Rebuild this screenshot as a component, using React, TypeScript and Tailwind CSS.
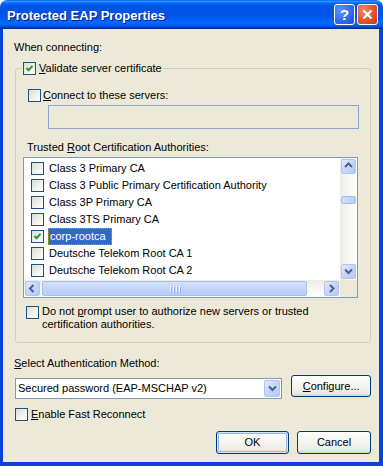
import React from "react"

const rows = [
    { label: "Class 3 Primary CA" },
    { label: "Class 3 Public Primary Certification Authority" },
    { label: "Class 3P Primary CA" },
    { label: "Class 3TS Primary CA" },
    { label: "corp-rootca", checked: true, selected: true },
    { label: "Deutsche Telekom Root CA 1" },
    { label: "Deutsche Telekom Root CA 2" },
]

function Check({ checked }: { checked?: boolean }) {
    return (
        <span className="w-[13px] h-[13px] shrink-0 border border-[#1c5180] bg-[linear-gradient(135deg,#dcdcd7_0%,#f2f2ee_60%,#ffffff_100%)] flex items-center justify-center">
            {checked && (
                <svg width="9" height="9" viewBox="0 0 9 9">
                    <polyline points="1.5,4 3.5,6.2 7.5,1.8" fill="none" stroke="#21a121" strokeWidth="2" />
                </svg>
            )}
        </span>
    )
}

function Arrow({ dir }: { dir: "up" | "down" | "left" | "right" }) {
    const pts = {
        up: "1,5 4.5,1.5 8,5",
        down: "1,2.5 4.5,6 8,2.5",
        left: "5.5,1 2,4.5 5.5,8",
        right: "3,1 6.5,4.5 3,8",
    }[dir]
    return (
        <svg width="9" height="9" viewBox="0 0 9 9">
            <polyline points={pts} fill="none" stroke="#4d6185" strokeWidth="2" />
        </svg>
    )
}

function ScrollBtn({ dir }: { dir: "up" | "down" | "left" | "right" }) {
    return (
        <div className="w-[17px] h-[17px] shrink-0 p-[1px]">
            <div className="w-full h-full rounded-[2px] border border-[#b1c4f0] bg-[linear-gradient(135deg,#e3ebfe_0%,#c6d6fc_45%,#b6caf7_100%)] flex items-center justify-center">
                <Arrow dir={dir} />
            </div>
        </div>
    )
}

function XpButton({ children, def, className }: { children: React.ReactNode; def?: boolean; className: string }) {
    return (
        <div
            className={`${className} rounded-[3px] border border-[#003c74] bg-[linear-gradient(to_bottom,#ffffff_0%,#f4f3ee_50%,#ecebe6_85%,#d6d0c5_100%)] flex items-center justify-center ${def ? "shadow-[inset_0_0_0_1px_#cee7ff,inset_0_0_0_2px_#98b8ea]" : ""}`}
        >
            {children}
        </div>
    )
}

function TitleBar() {
    return (
        <div className="h-[29px] shrink-0 rounded-t-[7px] bg-[linear-gradient(to_bottom,#0058ee_0%,#3593ff_4%,#288eff_6%,#127dff_8%,#036ffc_10%,#0262ee_14%,#0057e5_20%,#0054e3_24%,#0055eb_56%,#005bf5_66%,#026afe_76%,#0062ef_86%,#0052d6_92%,#0040ab_94%,#003092_100%)] flex items-center pl-[7px] pr-[5px]">
            <span className="flex-1 pt-[2px] text-white font-bold text-[13px] leading-[16px] [text-shadow:1px_1px_0_#0a1a7a]">
                Protected EAP Properties
            </span>
            <div className="w-[21px] h-[21px] rounded-[3px] border border-white bg-[radial-gradient(circle_at_30%_30%,#5b95ff_0%,#2f6cf2_55%,#1c4fd6_100%)] flex items-center justify-center text-white font-bold text-[15px] leading-none">
                ?
            </div>
            <div className="ml-[2px] w-[21px] h-[21px] rounded-[3px] border border-white bg-[radial-gradient(circle_at_30%_30%,#f08a6a_0%,#e0532e_55%,#c43c15_100%)] flex items-center justify-center">
                <svg width="11" height="11" viewBox="0 0 11 11">
                    <path d="M1.5 1.5 L9.5 9.5 M9.5 1.5 L1.5 9.5" stroke="#fff" strokeWidth="2.2" />
                </svg>
            </div>
        </div>
    )
}

function CertList() {
    return (
        <div className="ml-[7px] w-[335px] h-[141px] border border-[#7f9db9] bg-white flex">
            <div className="flex-1 flex flex-col min-w-0">
                <div className="flex-1 pt-[2px] overflow-hidden">
                    {rows.map((r) => (
                        <div key={r.label} className="h-[17px] flex items-center pl-[7px]">
                            <Check checked={r.checked} />
                            <span
                                className={`ml-[4px] h-[17px] whitespace-nowrap ${r.selected ? "pl-[1px] pr-[5px] leading-[15px] bg-[#316ac5] text-white border border-dotted border-[#ce953a]" : "pl-[1px] leading-[17px]"}`}
                            >
                                {r.label}
                            </span>
                        </div>
                    ))}
                </div>
                <div className="h-[17px] flex bg-[linear-gradient(to_bottom,#eeede5,#fefefb)]">
                    <ScrollBtn dir="left" />
                    <div className="w-[267px] h-[17px] p-[1px]">
                        <div className="w-full h-full rounded-[2px] border border-[#a9bde9] bg-[linear-gradient(to_bottom,#d4e0fd_0%,#c5d5fb_50%,#b8ccf7_100%)] flex items-center justify-center gap-[1px]">
                            <span className="w-[1px] h-[6px] bg-[#eef4fe] shadow-[1px_1px_0_#8cb0f8]" />
                            <span className="ml-[1px] w-[1px] h-[6px] bg-[#eef4fe] shadow-[1px_1px_0_#8cb0f8]" />
                            <span className="ml-[1px] w-[1px] h-[6px] bg-[#eef4fe] shadow-[1px_1px_0_#8cb0f8]" />
                            <span className="ml-[1px] w-[1px] h-[6px] bg-[#eef4fe] shadow-[1px_1px_0_#8cb0f8]" />
                        </div>
                    </div>
                    <div className="flex-1" />
                    <ScrollBtn dir="right" />
                </div>
            </div>
            <div className="w-[17px] flex flex-col bg-[linear-gradient(to_right,#eeede5,#fefefb)]">
                <ScrollBtn dir="up" />
                <div className="flex-1 pt-[21px] px-[1px]">
                    <div className="h-[8px] rounded-[2px] border border-[#a9bde9] bg-[linear-gradient(to_right,#d4e0fd,#b8ccf7)]" />
                </div>
                <ScrollBtn dir="down" />
                <div className="h-[17px] bg-[#ece9d8]" />
            </div>
        </div>
    )
}

export default function App() {
    return (
        <div className="w-[383px] h-[466px] flex flex-col font-['Liberation_Sans',Arial,sans-serif] text-[11px] text-black">
            <TitleBar />
            <div className="flex-1 flex flex-col bg-[#ece9d8] border-l-[3px] border-r-[4px] border-b-[4px] border-[#0842d8] pl-[12px] pr-[8px]">
                <div className="mt-[12px] -ml-px leading-[13px]">When connecting:</div>

                <div className="relative mt-[14px] h-[275px] border border-[#d0d0bf] rounded-[3px] flex flex-col">
                    <div className="absolute left-[6px] top-[-7px] px-[1px] bg-[#ece9d8] flex items-center gap-[3px] leading-[13px]">
                        <Check checked />
                        <span>
                            <u>V</u>alidate server certificate
                        </span>
                    </div>

                    <div className="mt-[20px] ml-[12px] flex items-center gap-[2px] leading-[13px]">
                        <Check />
                        <span>
                            <u>C</u>onnect to these servers:
                        </span>
                    </div>
                    <div className="mt-[3px] ml-[32px] w-[311px] h-[24px] border border-[#8fa6c6] bg-[#ece9d8]" />

                    <div className="mt-[12px] ml-[11px] leading-[13px]">
                        Trusted <u>R</u>oot Certification Authorities:
                    </div>
                    <div className="mt-[3px]">
                        <CertList />
                    </div>

                    <div className="mt-[8px] ml-[10px] flex items-start gap-[3px] leading-[13px]">
                        <Check />
                        <span className="-mt-px">
                            Do not <u>p</u>rompt user to authorize new servers or trusted
                            <br />
                            certification authorities.
                        </span>
                    </div>
                </div>

                <div className="mt-[14px] -ml-px leading-[13px]">
                    <u>S</u>elect Authentication Method:
                </div>

                <div className="mt-[5px] flex items-start">
                    <div className="mt-[3px] w-[268px] h-[21px] border border-[#7f9db9] bg-white flex items-center">
                        <span className="flex-1 pl-[2px] whitespace-nowrap">Secured password (EAP-MSCHAP v2)</span>
                        <div className="mr-[1px] w-[16px] h-[17px] rounded-[2px] border border-[#b1c4f0] bg-[linear-gradient(135deg,#e3ebfe_0%,#c6d6fc_45%,#b6caf7_100%)] flex items-center justify-center">
                            <Arrow dir="down" />
                        </div>
                    </div>
                    <XpButton className="ml-[9px] w-[80px] h-[22px]">
                        <span>
                            <u>C</u>onfigure...
                        </span>
                    </XpButton>
                </div>

                <div className="mt-[9px] flex items-center gap-[3px] leading-[13px]">
                    <Check />
                    <span>
                        <u>E</u>nable Fast Reconnect
                    </span>
                </div>

                <div className="mt-[10px] flex justify-end gap-[8px]">
                    <XpButton def className="w-[73px] h-[23px]">
                        OK
                    </XpButton>
                    <XpButton className="w-[74px] h-[23px]">Cancel</XpButton>
                </div>
            </div>
        </div>
    )
}
